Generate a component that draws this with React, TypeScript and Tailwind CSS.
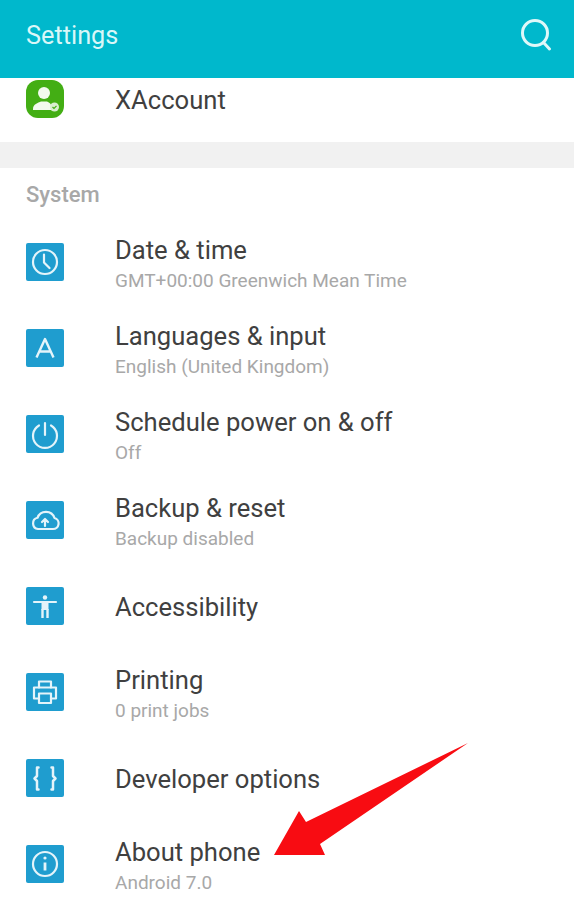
import React from "react";

const Tile = ({ children }: { children: React.ReactNode }) => (
  <div className="w-[38px] h-[38px] shrink-0 rounded-[2px] bg-[#1f9dcf] flex items-center justify-center">{children}</div>
);

const S = ({ children }: { children: React.ReactNode }) => (
  <svg width="38" height="38" viewBox="0 0 38 38" fill="none" stroke="#e4f4fa" strokeWidth="2.2" strokeLinecap="round" strokeLinejoin="round">
    {children}
  </svg>
);

const rows: { title: string; sub?: string; icon: React.ReactNode }[] = [
  {
    title: "Date & time",
    sub: "GMT+00:00 Greenwich Mean Time",
    icon: (
      <S>
        <circle cx="19" cy="19" r="12" />
        <path d="M18 11.5V19.5L23.5 25" />
      </S>
    ),
  },
  {
    title: "Languages & input",
    sub: "English (United Kingdom)",
    icon: (
      <S>
        <path d="M10.5 28.5L19 10L27.5 28.5M13.5 22.5H24.5" strokeWidth="2.4" strokeLinecap="butt" />
      </S>
    ),
  },
  {
    title: "Schedule power on & off",
    sub: "Off",
    icon: (
      <S>
        <path d="M19 8V20" />
        <path d="M13 10.5A12 12 0 1 0 25 10.5" />
      </S>
    ),
  },
  {
    title: "Backup & reset",
    sub: "Backup disabled",
    icon: (
      <S>
        <path d="M12 28H27A5.6 5.6 0 0 0 28.5 17A9 9 0 0 0 11.5 16.8A5.7 5.7 0 0 0 12 28Z" />
        <path d="M19 25V18.5M16 21L19 18L22 21" />
      </S>
    ),
  },
  {
    title: "Accessibility",
    icon: (
      <S>
        <circle cx="19" cy="10.5" r="2.2" fill="#e4f4fa" stroke="none" />
        <path d="M8 15H30" strokeWidth="2.2" />
        <path d="M15.5 15H22.5V23H15.5Z" fill="#e4f4fa" stroke="none" />
        <path d="M16.5 22V31M21.5 22V31" strokeWidth="2.4" strokeLinecap="butt" />
      </S>
    ),
  },
  {
    title: "Printing",
    sub: "0 print jobs",
    icon: (
      <S>
        <path d="M13 14.5V8.5H25V14.5" />
        <path d="M13 25.5H8V14.5H30V25.5H25" />
        <path d="M13 20.5H25V30H13Z" />
      </S>
    ),
  },
  {
    title: "Developer options",
    icon: (
      <S>
        <path d="M12.5 8.5H11V17L8.5 19.5L11 22V30.5H12.5" strokeWidth="2.5" />
        <path d="M25.5 8.5H27V17L29.5 19.5L27 22V30.5H25.5" strokeWidth="2.5" />
      </S>
    ),
  },
  {
    title: "About phone",
    sub: "Android 7.0",
    icon: (
      <S>
        <circle cx="19" cy="19" r="12" />
        <circle cx="19" cy="13" r="1.6" fill="#e4f4fa" stroke="none" />
        <path d="M19 17.5V25.5" strokeWidth="2.8" strokeLinecap="butt" />
      </S>
    ),
  },
];

export default function App() {
  return (
    <div className="relative h-[900px] w-[574px] overflow-hidden bg-white font-['Roboto',sans-serif]">
      <header className="h-[78px] bg-[#00b8cc] flex items-center justify-between pl-[26px] pr-[22px]">
        <span className="text-[25.3px] text-[#d9f7f8] relative -top-[3px]">Settings</span>
        <svg className="relative -top-[4px]" width="32" height="34" viewBox="0 0 32 34" fill="none" stroke="#dff8f9" strokeWidth="3" strokeLinecap="round">
          <circle cx="15" cy="15" r="12.5" />
          <path d="M23.5 24.5L29.5 31" />
        </svg>
      </header>

      <div className="h-[64px] pl-[26px] flex items-start pt-[2px]">
        <div className="relative w-[38px] h-[38px] rounded-[12px] bg-[#43ae14] flex items-center justify-center">
          <svg width="38" height="38" viewBox="0 0 38 38">
            <circle cx="18" cy="13" r="6" fill="#f2faee" />
            <path d="M7 29C7 24 12 23 15 21.5H21C24 23 25 24 25.5 26L26 30H7Z" fill="#f2faee" />
            <circle cx="28.5" cy="27" r="4.5" fill="#d8eed0" />
            <path d="M26.5 27L28 28.5L30.5 25.8" stroke="#43ae14" strokeWidth="1.2" fill="none" />
          </svg>
        </div>
        <span className="ml-[51px] text-[25.6px] leading-[38px] pt-[1px] text-[#404040]">XAccount</span>
      </div>

      <div className="h-[26px] bg-[#f1f1f1]" />

      <div className="h-[51px] pl-[26px] pt-[13px] text-[22px] leading-[28px] font-medium text-[#a8a8a8]">System</div>

      <ul>
        {rows.map((r) => (
          <li key={r.title} className="h-[86px] pl-[26px] flex items-center">
            <Tile>{r.icon}</Tile>
            <div className={r.sub ? "ml-[51px] pt-[6px] flex flex-col" : "ml-[51px] pt-[2px] flex flex-col"}>
              <span className="text-[25.6px] leading-[32px] text-[#404040]">{r.title}</span>
              <span className={r.sub ? "text-[19px] leading-[30px] text-[#a8a8a8]" : "hidden"}>{r.sub}</span>
            </div>
          </li>
        ))}
      </ul>

      <svg className="absolute left-0 top-0 pointer-events-none" width="574" height="900" viewBox="0 0 574 900">
        <polygon points="274,855 299,811 306,822 468,743 320,844 325,855" fill="#f80c12" />
      </svg>
    </div>
  );
}
